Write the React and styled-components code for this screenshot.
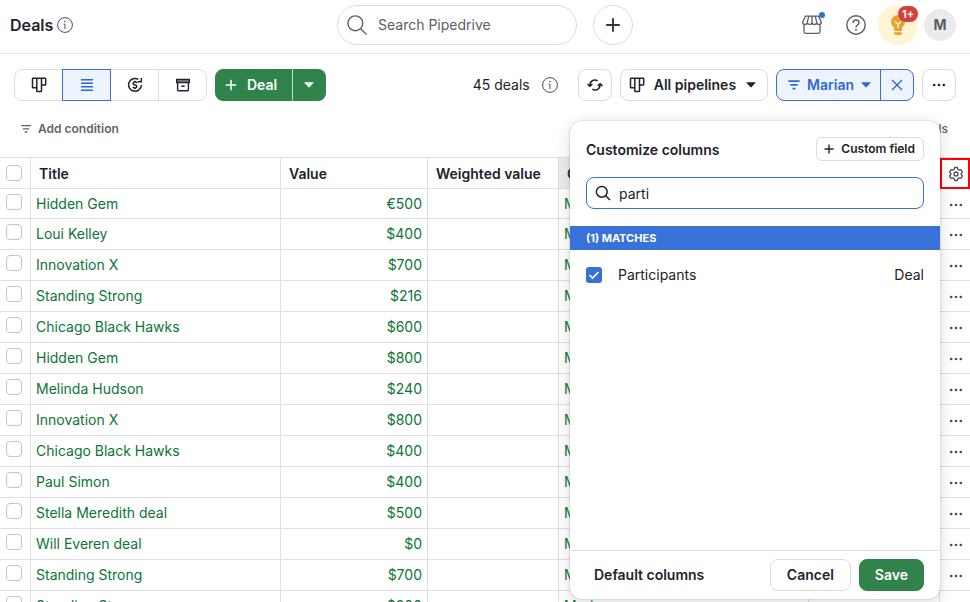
import React from "react";
import styled, { createGlobalStyle, css } from "styled-components";

const GlobalStyle = createGlobalStyle`
  *, *:before, *:after {
    box-sizing: border-box;
  }

  body {
    margin: 0;
    background: #fff;
    color: #21232c;
    font-family: Inter, "Liberation Sans", sans-serif;
    font-size: 14px;
    line-height: 20px;
  }

  button, input {
    font: inherit;
    color: inherit;
  }

  button {
    cursor: pointer;
  }

  svg {
    display: block;
    flex-shrink: 0;
  }
`;

const deals = [
  ["Hidden Gem", "€500"],
  ["Loui Kelley", "$400"],
  ["Innovation X", "$700"],
  ["Standing Strong", "$216"],
  ["Chicago Black Hawks", "$600"],
  ["Hidden Gem", "$800"],
  ["Melinda Hudson", "$240"],
  ["Innovation X", "$800"],
  ["Chicago Black Hawks", "$400"],
  ["Paul Simon", "$400"],
  ["Stella Meredith deal", "$500"],
  ["Will Everen deal", "$0"],
  ["Standing Strong", "$700"],
  ["Standing Strong", "$300"],
];

const Page = styled.div`
  height: 100vh;
  display: flex;
  flex-direction: column;
  overflow: hidden;
`;

const Header = styled.header`
  display: grid;
  grid-template-columns: 1fr auto 1fr;
  align-items: center;
  height: 54px;
  padding: 0 10px 4px;
  border-bottom: 1px solid #e4e4e6;
  flex-shrink: 0;
`;

const Heading = styled.h1`
  display: flex;
  align-items: center;
  gap: 4px;
  margin: 0;
  font-size: 16px;
  font-weight: 600;
`;

const HeaderCenter = styled.div`
  display: flex;
  gap: 16px;
`;

const Search = styled.label`
  display: flex;
  align-items: center;
  gap: 10px;
  width: 240px;
  height: 40px;
  padding: 0 8px;
  border: 1px solid #dcdcde;
  border-radius: 20px;
  color: #5b5d66;

  input {
    flex: 1;
    min-width: 0;
    padding: 0;
    border: 0;
    outline: 0;
    background: none;
    font-size: 14px;
  }

  input::placeholder {
    color: #5b5d66;
    opacity: 1;
  }
`;

const RoundButton = styled.button`
  position: relative;
  display: grid;
  place-items: center;
  width: ${(p) => p.$size || 32}px;
  height: ${(p) => p.$size || 32}px;
  padding: 0;
  border: ${(p) => (p.$outlined ? "1px solid #dcdcde" : "0")};
  border-radius: 50%;
  background: ${(p) => p.$bg || "transparent"};
  color: ${(p) => (p.$outlined ? "#33353e" : "#5b5d66")};
  font-weight: 700;
`;

const HeaderActions = styled.div`
  display: flex;
  align-items: center;
  justify-content: flex-end;
  gap: 6px;
  padding-right: 4px;
`;

const Dot = styled.span`
  position: absolute;
  top: 3px;
  right: 3px;
  width: 6px;
  height: 6px;
  border-radius: 50%;
  background: #2f6fdb;
`;

const Count = styled.span`
  position: absolute;
  top: 1px;
  right: 0;
  width: 20px;
  border-radius: 8px;
  background: #d63f3c;
  color: #fff;
  font-size: 11px;
  line-height: 16px;
`;

const Toolbar = styled.div`
  display: flex;
  align-items: center;
  justify-content: space-between;
  padding: 15px 14px 0;
`;

const Group = styled.div`
  display: flex;
  align-items: center;
  gap: ${(p) => p.$gap || 8}px;
`;

const Segments = styled.div`
  display: flex;
  height: 32px;
`;

const tones = {
  plain: css`
    background: #fff;
    border-color: #dcdcde;
    color: #21232c;
  `,
  blue: css`
    background: #edf4ff;
    border-color: #3571d8;
    color: #2b69d1;
  `,
  green: css`
    background: #30844b;
    border-color: #30844b;
    color: #fff;
  `,
};

const Button = styled.button`
  display: flex;
  align-items: center;
  justify-content: center;
  gap: ${(p) => p.$gap || 8}px;
  height: ${(p) => (p.$small ? 24 : 32)}px;
  padding: ${(p) => p.$pad || "0 8px"};
  border: 1px solid;
  border-radius: ${(p) => (p.$small ? 6 : 8)}px;
  font-size: ${(p) => (p.$small ? 12 : 14)}px;
  font-weight: 600;
  white-space: nowrap;
  ${(p) => tones[p.$tone || "plain"]}

  ${Segments} & {
    border-radius: 0;
  }
  ${Segments} &:not(:first-child) {
    margin-left: -1px;
  }
  ${Segments} &:first-child {
    border-radius: 8px 0 0 8px;
  }
  ${Segments} &:last-child {
    border-radius: 0 8px 8px 0;
  }
`;

const ViewButton = styled(Button)`
  width: 49px;
  z-index: ${(p) => (p.$tone ? 1 : 0)};
`;

const SplitToggle = styled(Button)`
  ${Segments} && {
    border-left-color: ${(p) => (p.$tone === "green" ? "#c5e0cd" : "#3571d8")};
  }
`;

const Counter = styled.div`
  display: flex;
  align-items: center;
  gap: 12px;
  margin-right: 12px;
`;

const Conditions = styled.div`
  display: flex;
  justify-content: space-between;
  padding: 18px 22px 18px 20px;
  color: #62646c;
  font-size: 12px;
  font-weight: 500;
`;

const ConditionButton = styled.button`
  display: flex;
  align-items: center;
  gap: 6px;
  padding: 0;
  border: 0;
  background: none;
  font-weight: 600;
`;

const ListArea = styled.main`
  position: relative;
  flex: 1;
  min-height: 0;
`;

const Table = styled.table`
  width: 100%;
  border-collapse: separate;
  border-spacing: 0;
  table-layout: fixed;

  th, td {
    height: 31px;
    padding: 0 5px;
    border: 0 solid #dfdfe1;
    border-width: 0 1px 1px 0;
    text-align: left;
    white-space: nowrap;
  }

  th {
    height: 32px;
    padding: 1px 8px 0;
    border-top-width: 1px;
    font-weight: 600;
  }

  tbody tr:first-child td {
    height: 30px;
  }

  th:first-child, td:first-child {
    padding: 0 6px;
  }

  th:last-child, td:last-child {
    border-right: 0;
    padding: 0;
  }

  a {
    color: #0b7535;
    text-decoration: none;
  }
`;

const SortedHeading = styled.th`
  background: #ececed;
`;

const Amount = styled.td`
  && {
    text-align: right;
    color: #0b7535;
  }
`;

const Tick = styled.input`
  appearance: none;
  display: block;
  width: 16px;
  height: 16px;
  margin: 0 0 4px;
  border: 1px solid #c3c4c8;
  border-radius: 4px;
  background: #fff;

  th & {
    margin: 0;
  }
`;

const RowMenu = styled.button`
  display: grid;
  place-items: center;
  width: 100%;
  height: 29px;
  padding: 2px 0 0 2px;
  border: 0;
  background: none;
  color: #4b4d56;
`;

const GearButton = styled(RowMenu)`
  height: 31px;
  margin-bottom: -1px;
  padding: 0 0 0 2px;
  border: 2px solid #fb0007;
`;

const Panel = styled.section`
  position: absolute;
  top: -36px;
  right: 30px;
  bottom: 3px;
  display: flex;
  flex-direction: column;
  width: 370px;
  border-radius: 12px;
  background: #fff;
  box-shadow: 0 0 2px rgba(33, 35, 44, 0.3), 0 4px 16px rgba(33, 35, 44, 0.16);
`;

const PanelTop = styled.div`
  display: flex;
  flex-direction: column;
  gap: 16px;
  padding: 16px 16px 17px;
`;

const PanelTitle = styled.div`
  display: flex;
  align-items: center;
  justify-content: space-between;

  h2 {
    margin: 0;
    padding-top: 2px;
    font-size: 14px;
    font-weight: 600;
  }
`;

const FieldSearch = styled.label`
  display: flex;
  align-items: center;
  gap: 8px;
  height: 32px;
  padding: 0 8px;
  border: 1px solid #3571d8;
  border-radius: 8px;

  input {
    flex: 1;
    min-width: 0;
    padding: 2px 0 0;
    border: 0;
    outline: 0;
    background: none;
  }
`;

const Matches = styled.div`
  padding: 0 16px;
  background: #3872d9;
  color: #fff;
  font-size: 11px;
  font-weight: 700;
  line-height: 24px;
`;

const Option = styled.label`
  display: flex;
  align-items: center;
  gap: 16px;
  padding: 15px 16px;
`;

const OptionName = styled.span`
  flex: 1;
`;

const CheckBox = styled.span`
  display: grid;
  width: 16px;
  height: 16px;

  input, svg {
    grid-area: 1 / 1;
  }

  input {
    appearance: none;
    width: 16px;
    height: 16px;
    margin: 0;
    border-radius: 3px;
    background: #3571d8;
  }

  svg {
    color: #fff;
    z-index: 1;
  }
`;

const PanelFooter = styled.footer`
  display: flex;
  align-items: center;
  justify-content: space-between;
  margin-top: auto;
  padding: 8px 16px;
  border-top: 1px solid #dfdfe1;
`;

const TextButton = styled.button`
  padding: 0 8px;
  border: 0;
  background: none;
  font-weight: 600;
`;

const Icon = ({ size = 16, width = 2, children }) => (
  <svg
    width={size}
    height={size}
    viewBox="0 0 16 16"
    fill="none"
    stroke="currentColor"
    strokeWidth={width}
    aria-hidden="true"
  >
    {children}
  </svg>
);

const InfoIcon = () => (
  <Icon width={1}>
    <circle cx="8" cy="8" r="7.4" stroke="#4b4d56" />
    <path d="M6.6 7.2H8V12" stroke="#4b4d56" />
    <circle cx="7.9" cy="4.6" r=".8" fill="#4b4d56" stroke="none" />
  </Icon>
);

const SearchIcon = ({ size, width }) => (
  <Icon size={size} width={width}>
    <circle cx="6.8" cy="6.8" r="5.4" />
    <path d="M10.7 10.7 15 15" />
  </Icon>
);

const PlusIcon = ({ size = 16, width = 1.5 }) => (
  <Icon size={size} width={width}>
    <path d="M8 2v12M2 8h12" />
  </Icon>
);

const PipelineIcon = () => (
  <Icon width={1.5}>
    <path
      d="M5.8 10.8H2.1q-.6 0-.6-.6V1.9q0-.6.6-.6h12q.6 0 .6.6v5.600q0 .6-.6.6h-3.600M5.800 1.300v12.400q0 .8.8.8h3.100q.8 0 .8-.8V1.300"
      strokeLinejoin="round"
    />
  </Icon>
);

const ListIcon = () => (
  <Icon width={1.4}>
    <path d="M2 2.7h12M2 6.2h12M2 9.8h12M2 13.3h12" />
  </Icon>
);

const ForecastIcon = () => (
  <Icon width={1.5}>
    <path d="M11.4 2.4A6.4 6.4 0 1 0 14.4 8" />
    <path d="M10.6 4.7h3.7V1" />
    <path d="M10 5.9Q9.4 5 8 5 6.100 5 6.100 6.400q0 1.200 1.900 1.600t1.900 1.600Q9.900 11 8 11q-1.400 0-2.100-1M8 3.800V5m0 6v1.300" />
  </Icon>
);

const ArchiveIcon = () => (
  <Icon width={1.4}>
    <path d="M1.7 2.5h12.600v3H1.700z" fill="#8c8d94" />
    <path d="M2.600 5.500v7.300q0 1 1 1h8.800q1 0 1-1V5.500M6.300 9.300h3.400" />
  </Icon>
);

const CaretIcon = () => (
  <svg width="12" height="6" viewBox="-1 0 12 6" fill="currentColor" aria-hidden="true">
    <path d="M.8.3h8.4q.7 0 .2.6L5.4 5.3q-.4.4-.8 0L.6.9Q.1.3.8.3" />
  </svg>
);

const RefreshIcon = () => (
  <Icon width={1.5}>
    <path d="M3 8.5A5 5 0 0 1 10.7 3.8M13 7.5A5 5 0 0 1 5.3 12.2" />
    <path d="M.5 8.800 2.900 6.800 5.300 8.800M10.700 7.200l2.400 2 2.400-2" transform="matrix(1 0 0 -1 0 16)" />
  </Icon>
);

const FilterIcon = ({ size = 14 }) => (
  <Icon size={size} width={1.9}>
    <path d="M1.5 3.5h13M3.8 7.8h8.4M6.3 12.1h3.4" />
  </Icon>
);

const MoreIcon = () => (
  <svg width="14" height="4" viewBox="0 0 14 4" fill="currentColor" aria-hidden="true">
    <circle cx="2.2" cy="2" r="1.3" />
    <circle cx="7" cy="2" r="1.3" />
    <circle cx="11.8" cy="2" r="1.3" />
  </svg>
);

const GearIcon = () => (
  <Icon width={1.3}>
    <path
      d="M6.700 1.500h2.600l.6 1.900 1.300.7 1.900-.4 1.300 2.300L13.200 7.400v1.200l1.200 1.400-1.300 2.300-1.900-.4-1.300.7-.6 1.900H6.700l-.6-1.900-1.300-.7-1.900.4L1.600 10l1.200-1.400V7.400L1.600 6l1.300-2.300 1.900.4 1.300-.7z"
      strokeLinejoin="round"
    />
    <circle cx="8" cy="8" r="2" />
  </Icon>
);

const MarketIcon = () => (
  <svg
    width="20"
    height="20"
    viewBox="0 0 20 20"
    fill="none"
    stroke="currentColor"
    strokeWidth="1.3"
    aria-hidden="true"
  >
    <path d="M3.4 1.2h13.2L19.3 7.2q0 2.2-2.3 2.2t-2.3-2.2q0 2.200-2.350 2.200T10 7.200q0 2.200-2.350 2.200T5.300 7.200q0 2.200-2.300 2.200T.7 7.200zM5.300 7.200l1.500-6M10 7.200v-6M14.700 7.200l-1.500-6M2 9.200v7.600q0 1.500 1.500 1.500h13q1.500 0 1.500-1.500V9.200" />
  </svg>
);

const HelpIcon = () => (
  <svg
    width="20"
    height="20"
    viewBox="0 0 20 20"
    fill="none"
    stroke="currentColor"
    strokeWidth="1.4"
    aria-hidden="true"
  >
    <circle cx="10" cy="10" r="9.2" />
    <path d="M7 8q0-3 3-3t3 2.700q0 1.500-1.700 2.400Q10 10.800 10 12.400" />
    <circle cx="10" cy="14.8" r="1" fill="currentColor" stroke="none" />
  </svg>
);

const BulbIcon = () => (
  <svg width="16" height="20" viewBox="0 0 16 20" fill="#e8a02e" aria-hidden="true">
    <path d="M8 0a7 7 0 0 1 7 7q0 3.400-3 5.600V15q0 1-1 1H5q-1 0-1-1v-2.400Q1 10.400 1 7a7 7 0 0 1 7-7M4 17.200h8q0 2.800-2.500 2.800h-3Q4 20 4 17.200" />
    <path d="M5 6.500 8 9.500l3-3M8 9.500V13" fill="none" stroke="#fff6d6" strokeWidth="1.4" />
  </svg>
);

const App = () => {
  return (
    <>
      <GlobalStyle />
      <Page>
        <Header>
          <Heading>
            Deals <InfoIcon />
          </Heading>
          <HeaderCenter>
            <Search>
              <SearchIcon size={22} width={1} />
              <input type="search" placeholder="Search Pipedrive" aria-label="Search Pipedrive" />
            </Search>
            <RoundButton $size={40} $outlined aria-label="Quick add">
              <PlusIcon size={18} width={1.7} />
            </RoundButton>
          </HeaderCenter>
          <HeaderActions>
            <Group $gap={12}>
              <RoundButton aria-label="Marketplace">
                <MarketIcon />
                <Dot />
              </RoundButton>
              <RoundButton aria-label="Help">
                <HelpIcon />
              </RoundButton>
            </Group>
            <RoundButton $size={40} $bg="#fff5d5" aria-label="Tips">
              <BulbIcon />
              <Count>1+</Count>
            </RoundButton>
            <RoundButton $bg="#ebebec">M</RoundButton>
          </HeaderActions>
        </Header>

        <Toolbar>
          <Group>
            <Segments>
              <ViewButton aria-label="Pipeline">
                <PipelineIcon />
              </ViewButton>
              <ViewButton $tone="blue" aria-label="List">
                <ListIcon />
              </ViewButton>
              <ViewButton aria-label="Forecast">
                <ForecastIcon />
              </ViewButton>
              <ViewButton aria-label="Archive">
                <ArchiveIcon />
              </ViewButton>
            </Segments>
            <Segments>
              <Button $tone="green" $pad="0 15px 0 8px" $gap={9}>
                <PlusIcon size={14} width={1.7} /> Deal
              </Button>
              <SplitToggle $tone="green" $pad="0 10px" aria-label="More deal options">
                <CaretIcon />
              </SplitToggle>
            </Segments>
          </Group>
          <Group>
            <Counter>
              45 deals <InfoIcon />
            </Counter>
            <Button aria-label="Refresh">
              <RefreshIcon />
            </Button>
            <Button $pad="0 10px 0 8px" $gap={9}>
              <PipelineIcon /> All pipelines <CaretIcon />
            </Button>
            <Segments>
              <Button $tone="blue" $pad="0 8px 0 10px" $gap={6}>
                <FilterIcon /> Marian <CaretIcon />
              </Button>
              <SplitToggle $tone="blue" aria-label="Clear filter">
                <Icon width={1.4}>
                  <path d="m3 3 10 10M13 3 3 13" />
                </Icon>
              </SplitToggle>
            </Segments>
            <Button $pad="0 9px" aria-label="More">
              <MoreIcon />
            </Button>
          </Group>
        </Toolbar>

        <Conditions>
          <ConditionButton>
            <FilterIcon size={12} /> Add condition
          </ConditionButton>
          <span>45 deals</span>
        </Conditions>

        <ListArea>
          <Table>
            <colgroup>
              <col style={{ width: 31 }} />
              <col style={{ width: 250 }} />
              <col style={{ width: 147 }} />
              <col style={{ width: 131 }} />
              <col style={{ width: 250 }} />
              <col />
              <col style={{ width: 30 }} />
            </colgroup>
            <thead>
              <tr>
                <th>
                  <Tick type="checkbox" aria-label="Select all deals" />
                </th>
                <th>Title</th>
                <th>Value</th>
                <th>Weighted value</th>
                <SortedHeading>Owner</SortedHeading>
                <th />
                <th>
                  <GearButton aria-label="Customize columns">
                    <GearIcon />
                  </GearButton>
                </th>
              </tr>
            </thead>
            <tbody>
              {deals.map(([title, value], i) => (
                <tr key={i}>
                  <td>
                    <Tick type="checkbox" aria-label={`Select ${title}`} />
                  </td>
                  <td>
                    <a href="#deal">{title}</a>
                  </td>
                  <Amount>{value}</Amount>
                  <td />
                  <td>
                    <a href="#owner">Marian</a>
                  </td>
                  <td />
                  <td>
                    <RowMenu aria-label={`Actions for ${title}`}>
                      <MoreIcon />
                    </RowMenu>
                  </td>
                </tr>
              ))}
            </tbody>
          </Table>

          <Panel>
            <PanelTop>
              <PanelTitle>
                <h2>Customize columns</h2>
                <Button $small $pad="0 8px 0 6px" $gap={6}>
                  <PlusIcon size={12} width={1.9} /> Custom field
                </Button>
              </PanelTitle>
              <FieldSearch>
                <SearchIcon size={16} width={1.5} />
                <input type="text" defaultValue="parti" aria-label="Search columns" />
              </FieldSearch>
            </PanelTop>
            <Matches>(1) MATCHES</Matches>
            <Option>
              <CheckBox>
                <input type="checkbox" defaultChecked />
                <Icon width={1.6}>
                  <path d="m3.5 8 3 3 6-6" />
                </Icon>
              </CheckBox>
              <OptionName>Participants</OptionName>
              <span>Deal</span>
            </Option>
            <PanelFooter>
              <TextButton>Default columns</TextButton>
              <Group>
                <Button $pad="0 16px">Cancel</Button>
                <Button $tone="green" $pad="0 15px">
                  Save
                </Button>
              </Group>
            </PanelFooter>
          </Panel>
        </ListArea>
      </Page>
    </>
  );
};

export default App;
